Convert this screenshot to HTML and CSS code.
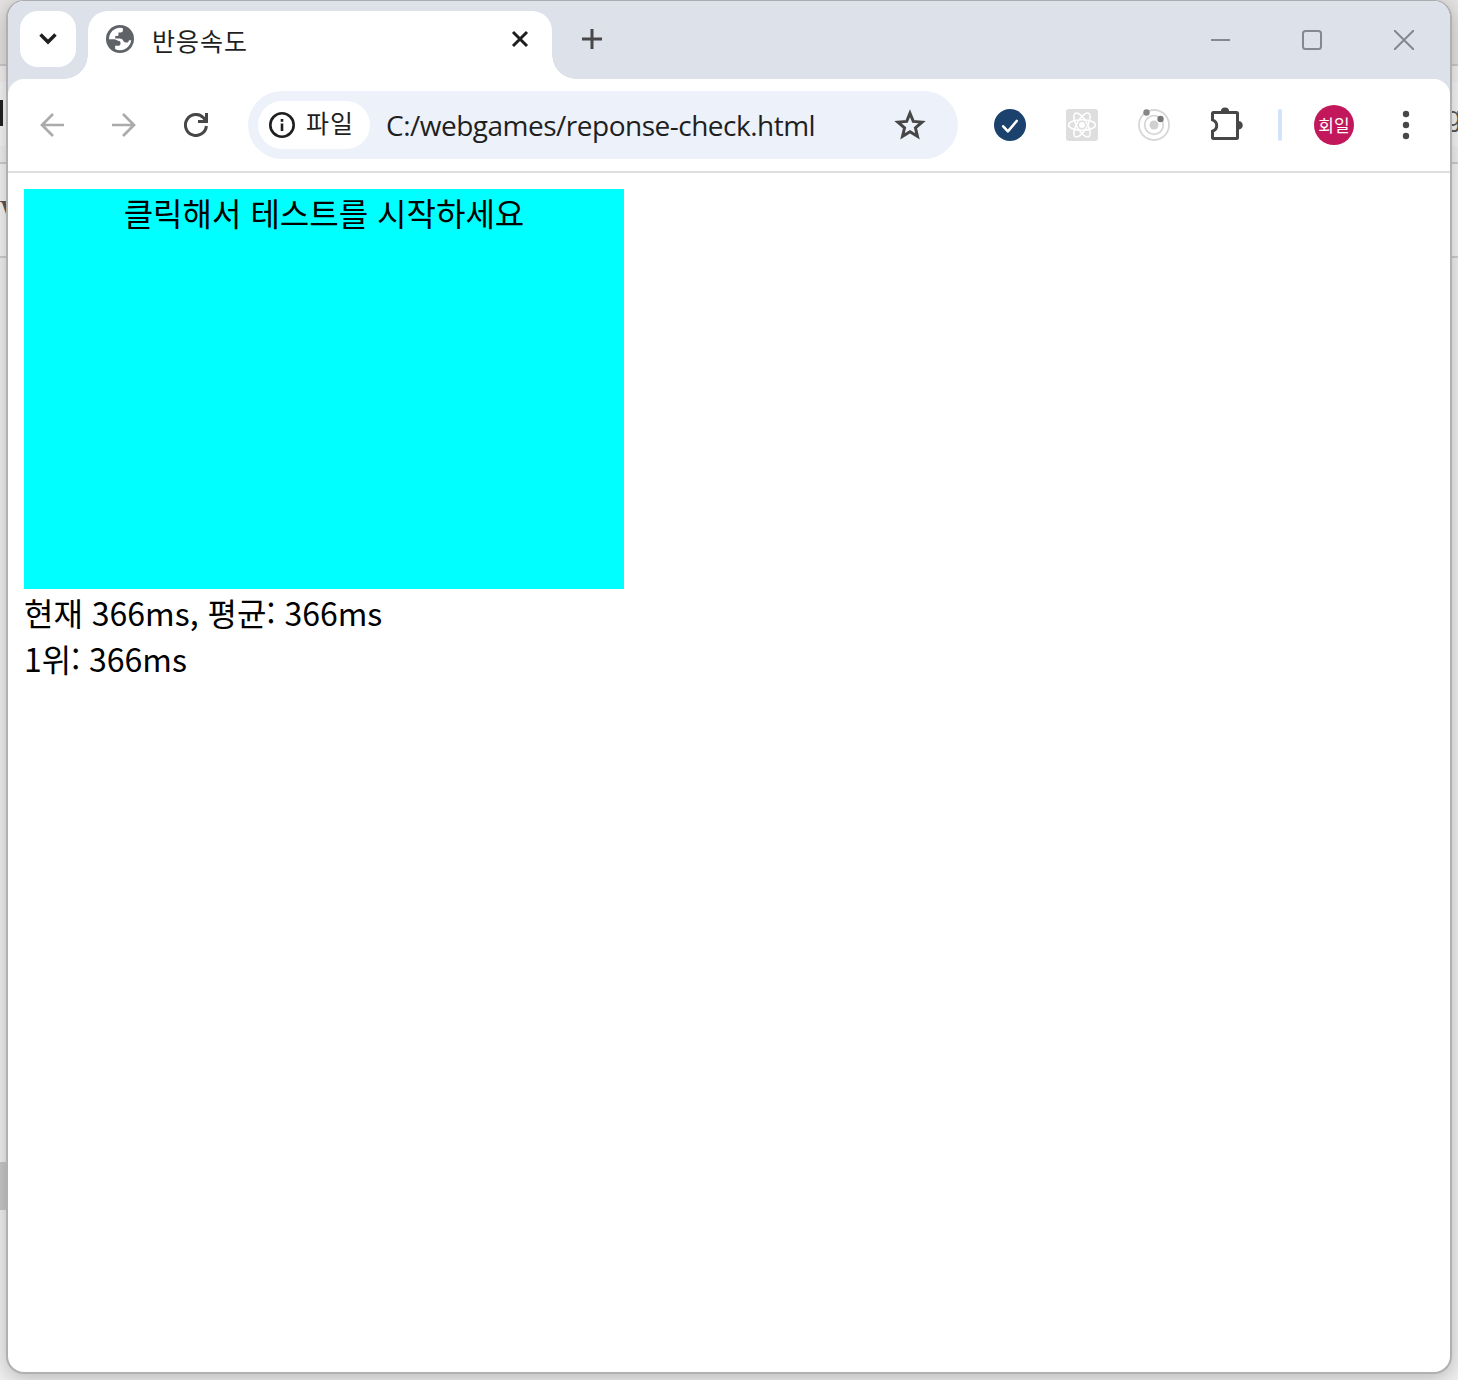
FILE: index.html
```html
<!DOCTYPE html>
<html lang="ko">
<head>
<meta charset="utf-8">
<title>반응속도</title>
<link rel="stylesheet" href="styles.css">
</head>
<body>
<div class="desktop">
  <span class="behind behind-bar"></span>
  <span class="behind behind-left">W</span>
  <span class="behind behind-right">g</span>
  <span class="behind behind-thumb"></span>
  <div class="window">
    <header class="tabstrip">
      <button class="tab-search" aria-label="탭 검색">
        <svg width="20" height="14" viewBox="0 0 20 14"><path d="M2.500 2.500 10 10l7.500-7.500" fill="none" stroke="#1f1f1f" stroke-width="3.400"/></svg>
      </button>
      <div class="tab">
        <svg width="28" height="28" viewBox="0 0 28 28"><circle cx="14" cy="14" r="14" fill="#5f6368"/><path fill="#fff" d="M3 14.300C3 7.800 8 2.800 14 2.800q1.600 0 2.900.4v2.300q0 2-2.200 2h-2.200v2.200q0 1.200-1.200 1.200H9.200v2.600H13.500q3 0 3.800 2.200.6 1.800 2.300 1.800h2q1.300-.2 1.300-2.200h2.300C24.500 20.900 19.900 25.200 14 25.200q-2.500 0-4.900-1.200V20.800h3.600q1.800 0 1.800-2v-1.200q0-1.800-2.400-1.800L8.800 14.300z"/></svg>
        <span class="tab-title">반응속도</span>
        <svg class="tab-close" width="18" height="18" viewBox="0 0 18 18"><path d="M2 2l14 14M16 2 2 16" stroke="#1f1f1f" stroke-width="3"/></svg>
      </div>
      <svg class="new-tab" width="20" height="20" viewBox="0 0 20 20"><path d="M10 0v20M0 10h20" stroke="#474747" stroke-width="3"/></svg>
      <div class="controls">
        <svg width="20" height="20" viewBox="-1 0 20 20"><path d="M0 10h20" stroke="#858890" stroke-width="2"/></svg>
        <svg width="20" height="20" viewBox="0 0 20 20"><rect x="1" y="1" width="18" height="18" rx="2.500" fill="none" stroke="#858890" stroke-width="2"/></svg>
        <svg width="20" height="20" viewBox="0 0 20 20"><path d="M0 0l20 20M20 0 0 20" stroke="#858890" stroke-width="2"/></svg>
      </div>
    </header>
    <nav class="toolbar">
      <span class="slot"><svg width="24" height="24" viewBox="0 0 24 24"><path d="M24 12H2M13 1 2 12l11 11" fill="none" stroke="#ababab" stroke-width="2.700"/></svg></span>
      <span class="slot"><svg width="24" height="24" viewBox="0 0 24 24"><path d="M0 12h22M11 1l11 11-11 11" fill="none" stroke="#ababab" stroke-width="2.700"/></svg></span>
      <span class="slot"><svg width="24" height="24" viewBox="0 0 24 24"><path d="M22.400 13A10.500 10.500 0 1 1 19.500 4.700L22 8" fill="none" stroke="#474747" stroke-width="3"/><path d="M22.500 0v8.500H14" fill="none" stroke="#474747" stroke-width="3"/></svg></span>
      <div class="omnibox">
        <div class="chip">
          <svg width="26" height="26" viewBox="0 0 26 26"><circle cx="13" cy="13" r="11.700" fill="none" stroke="#1f1f1f" stroke-width="2.600"/><path d="M13 11.500V19M13 7v2.800" stroke="#1f1f1f" stroke-width="2.600"/></svg>
          <span>파일</span>
        </div>
        <span class="url">C:/webgames/reponse-check.html</span>
        <svg class="star" width="32" height="32" viewBox="0 0 30 30"><path d="M15 4l3.100 7.600 8.200.7-6.200 5.300 1.900 8L15 21.300l-7 4.300 1.900-8-6.200-5.300 8.200-.7z" fill="none" stroke="#474747" stroke-width="2.800"/></svg>
      </div>
      <span class="slot"><svg width="32" height="32" viewBox="0 0 32 32"><circle cx="16" cy="16" r="16" fill="#1b426c"/><path d="M9.200 17.300l4.700 5L22.700 12" fill="none" stroke="#fff" stroke-width="2.600" stroke-linecap="round" stroke-linejoin="round"/></svg></span>
      <span class="slot"><svg width="32" height="32" viewBox="0 0 32 32"><rect width="32" height="32" rx="3" fill="#dedede"/><g fill="none" stroke="#fff" stroke-width="1.500"><ellipse cx="16" cy="16" rx="13.500" ry="5.200"/><ellipse cx="16" cy="16" rx="13.500" ry="5.200" transform="rotate(60 16 16)"/><ellipse cx="16" cy="16" rx="13.500" ry="5.200" transform="rotate(120 16 16)"/></g><circle cx="16" cy="16" r="3" fill="#fff"/></svg></span>
      <span class="slot"><svg width="32" height="32" viewBox="0 0 32 32"><g fill="none" stroke="#d7d7d7" stroke-width="1.800"><circle cx="16" cy="16" r="15"/><circle cx="16" cy="16" r="9.300"/></g><circle cx="16" cy="16" r="4.500" fill="#d0d0d0"/><circle cx="8.500" cy="3.500" r="3.200" fill="#868686"/><circle cx="22.500" cy="10" r="3.200" fill="#767676"/></svg></span>
      <span class="slot"><svg width="36" height="36" viewBox="-1 1.500 36 36"><path d="M4.500 6.500h23q1 0 1 1v24q0 1-1 1h-23q-1 0-1-1v-6.300q4.200-1.500 4.200-5.700t-4.200-5.700V7.500q0-1 1-1z" fill="none" stroke="#474747" stroke-width="3" transform="translate(0 .5)"/><path d="M11.900 6a4.100 4.100 0 0 1 8.200 0zM29.500 15.500a4.300 4.300 0 0 1 0 8.600z" fill="#474747"/></svg></span>
      <span class="divider"></span>
      <span class="slot"><span class="avatar">회일</span></span>
      <span class="slot"><svg width="8" height="30" viewBox="0 0 8 30" fill="#474747"><circle cx="4" cy="4" r="3.200"/><circle cx="4" cy="15" r="3.200"/><circle cx="4" cy="26" r="3.200"/></svg></span>
    </nav>
    <main class="page">
      <div class="screen">클릭해서 테스트를 시작하세요</div>
      <div>현재 366ms, 평균: 366ms</div>
      <div>1위: 366ms</div>
    </main>
  </div>
</div>
</body>
</html>
```
FILE: styles.css
```css
* { box-sizing: border-box; }
body { margin: 0; font-family: "Noto Sans CJK KR", sans-serif; }
svg { display: block; flex: none; }
.desktop {
  position: relative;
  height: 1380px;
  padding: 0 6px 6px;
  overflow: hidden;
  background: linear-gradient(#e4e3e1 0 64px, #cccccc 64px 66px, #f3f1ef 66px 82px, #f6f6f6 82px 146px, #f0f0f0 146px 162px, #cfcfcf 162px 164px, #f4f4f4 164px 256px, #cfcfcf 256px 258px, #f0f0f0 258px);
}
.behind { position: absolute; color: #555; line-height: 1; }
.behind-bar { left: 0; top: 100px; width: 3px; height: 26px; background: #222; }
.behind-left { left: 0; top: 195px; font: 36px/1 "Liberation Serif", serif; }
.behind-right { left: 1446px; top: 103px; font: 28px/1 "Liberation Sans", sans-serif; }
.behind-thumb { left: 0; top: 1162px; width: 8px; height: 48px; background: #c8c8c8; }
.window {
  position: relative;
  width: 1446px;
  height: 1374px;
  border: 2px solid #b0b0b0;
  border-top: 1px solid #a9acb0;
  border-radius: 18px;
  overflow: hidden;
  background: #fff;
  box-shadow: 0 4px 20px rgba(0, 0, 0, .24);
}
.tabstrip {
  display: flex;
  height: 94px;
  margin-bottom: -16px;
  padding: 10px 36px 16px 12px;
  background: #dde1e9;
}
.tab-search {
  display: flex;
  align-items: center;
  justify-content: center;
  width: 56px;
  height: 56px;
  padding: 0;
  border: 0;
  border-radius: 18px;
  background: #fff;
}
.tab {
  position: relative;
  display: flex;
  align-items: center;
  width: 464px;
  margin-left: 12px;
  padding: 0 23px 12px 18px;
  border-radius: 20px 20px 0 0;
  background: #fff;
}
.tab::before, .tab::after {
  content: "";
  position: absolute;
  bottom: 0;
  width: 24px;
  height: 24px;
}
.tab::before { left: -24px; background: radial-gradient(circle at 0 0, transparent 23.5px, #fff 24px); }
.tab::after { right: -24px; background: radial-gradient(circle at 100% 0, transparent 23.5px, #fff 24px); }
.tab-title { margin-left: 18px; padding-top: 2px; font-size: 25px; line-height: 32px; letter-spacing: 1px; color: #1f1f1f; }
.tab-close { margin-left: auto; }
.new-tab { margin: 18px 0 0 30px; }
.controls { display: flex; gap: 72px; margin: 19px 0 0 auto; }
.toolbar {
  position: relative;
  display: flex;
  align-items: center;
  height: 94px;
  padding: 0 8px;
  border-bottom: 2px solid #dedede;
  border-radius: 16px 16px 0 0;
  background: #fff;
}
.slot { display: flex; align-items: center; justify-content: center; flex: none; width: 72px; }
.omnibox {
  display: flex;
  align-items: center;
  width: 710px;
  height: 68px;
  margin: 0 16px;
  padding: 0 32px 0 10px;
  border-radius: 34px;
  background: #ecf1fa;
}
.chip {
  display: flex;
  align-items: center;
  gap: 11px;
  width: 112px;
  height: 48px;
  padding-left: 11px;
  border-radius: 24px;
  background: #fff;
  font-size: 25px;
  line-height: 36px;
  letter-spacing: 1px;
  color: #1f1f1f;
}
.chip span { margin-top: -7px; }
.url { margin-left: 16px; font: 28px/36px "Open Sans", sans-serif; letter-spacing: -.5px; color: #1f1f1f; }
.star { margin-left: auto; }
.divider { width: 4px; height: 32px; margin: 0 16px; border-radius: 2px; background: #d3e3fd; }
.avatar {
  width: 40px;
  height: 40px;
  border-radius: 50%;
  background: #c2185b;
  color: #fff;
  font-size: 17px;
  line-height: 39px;
  text-align: center;
}
.page { padding: 16px; font-size: 32px; line-height: 46px; color: #000; }
.screen { width: 600px; height: 400px; background: #0ff; text-align: center; }
```
